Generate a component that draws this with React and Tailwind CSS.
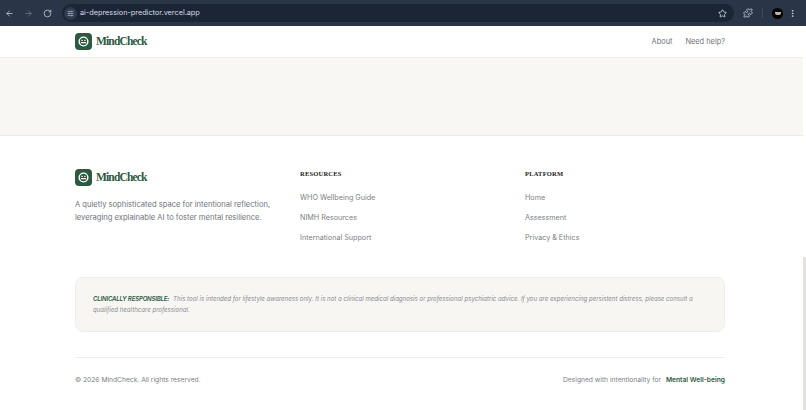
import { ArrowLeft, ArrowRight, RotateCw, Star, Puzzle, EllipsisVertical, SlidersHorizontal } from 'lucide-react'

const RESOURCES = ['WHO Wellbeing Guide', 'NIMH Resources', 'International Support']
const PLATFORM = ['Home', 'Assessment', 'Privacy & Ethics']

function Logo() {
  return (
    <div className="flex items-center gap-[4px]">
      <div className="flex h-[17px] w-[17px] items-center justify-center rounded-[4px] bg-[#2d5a3f]">
        <svg width="11" height="11" viewBox="0 0 24 24" fill="none">
          <circle cx="12" cy="12" r="9.5" stroke="white" strokeWidth="3" />
          <path d="M7.5 14.5h9" stroke="white" strokeWidth="3" strokeLinecap="round" />
          <path d="M8 9.5h2M14 9.5h2" stroke="white" strokeWidth="2" strokeLinecap="round" />
        </svg>
      </div>
      <span className='font-["Liberation_Serif",serif] text-[11.5px] font-bold tracking-[-0.85px] text-[#2d5a3f]'>MindCheck</span>
    </div>
  )
}

function LinkColumn({ title, links }) {
  return (
    <div className="flex flex-col">
      <h4 className='font-["Liberation_Serif",serif] text-[6.5px] leading-[9px] font-bold tracking-[0.2px] text-[#1a1a1a]'>{title}</h4>
      <ul className="mt-[14px] flex flex-col gap-[9px]">
        {links.map(l => (
          <li key={l} className="text-[7.2px] leading-[11px] text-[#7a7f85]">{l}</li>
        ))}
      </ul>
    </div>
  )
}

export default function App() {
  return (
    <div className='flex h-[410px] w-[806px] flex-col overflow-hidden bg-white font-["Inter",sans-serif]'>
      {/* browser chrome */}
      <div className="flex h-[26px] shrink-0 items-center bg-[#2a3648] pl-[5px] pr-[7px] text-[#c9d1dc]">
        <ArrowLeft size={9} strokeWidth={2} />
        <ArrowRight size={9} strokeWidth={2} className="ml-[10px] text-[#6d7888]" />
        <RotateCw size={9} strokeWidth={2} className="ml-[10px]" />
        <div className="ml-[10px] flex h-[18px] w-[672px] items-center rounded-full bg-[#1c2536] pl-[2px] pr-[7px]">
          <div className="flex h-[13px] w-[13px] items-center justify-center rounded-full bg-[#2f3b4e]">
            <SlidersHorizontal size={7} />
          </div>
          <span className="ml-[3px] text-[7.3px] text-[#d6dce5]">ai-depression-predictor.vercel.app</span>
          <Star size={9} strokeWidth={2} className="ml-auto text-[#e4e8ee]" />
        </div>
        <Puzzle size={10} strokeWidth={2} className="ml-[9px]" />
        <div className="ml-[9px] h-[10px] w-px bg-[#3d4a5d]" />
        <div className="ml-[9px] flex h-[11px] w-[11px] items-center justify-center rounded-full bg-black">
          <div className="h-[3px] w-[6px] rounded-b-[2px] bg-[#b9b4a6]" />
        </div>
        <EllipsisVertical size={9} strokeWidth={2.4} className="ml-[5px]" />
      </div>

      <div className="flex min-h-0 flex-1">
        <div className="flex min-w-0 flex-1 flex-col">
          {/* nav */}
          <header className="flex h-[32px] shrink-0 items-center justify-between border-b border-[#ecebe6] pl-[75px] pr-[78px]">
            <Logo />
            <nav className="flex gap-[13px] text-[7.4px] text-[#6f747a]">
              <span>About</span>
              <span>Need help?</span>
            </nav>
          </header>

          <div className="h-[78px] shrink-0 border-b border-[#ecebe6] bg-[#f8f7f3]" />

          {/* footer */}
          <footer className="flex-1 pl-[75px] pr-[78px] pt-[33px]">
            <div className="grid grid-cols-[225px_225px_1fr]">
              <div>
                <Logo />
                <p className="mt-[13px] w-[205px] text-[7.6px] leading-[12.5px] text-[#6f747a]">
                  A quietly sophisticated space for intentional reflection, leveraging explainable AI to foster mental resilience.
                </p>
              </div>
              <div><LinkColumn title="RESOURCES" links={RESOURCES} /></div>
              <div><LinkColumn title="PLATFORM" links={PLATFORM} /></div>
            </div>

            <div className="mt-[34px] rounded-[8px] border border-[#eeede8] bg-[#f7f6f3] px-[17px] py-[16px] text-[6.1px] leading-[10.5px] text-[#8a8d90] italic">
              <span className="font-semibold tracking-[-0.2px] text-[#2d5a3f]">CLINICALLY RESPONSIBLE:</span>
              <span className="ml-[4px]">This tool is intended for lifestyle awareness only. It is not a clinical medical diagnosis or professional psychiatric advice. If you are experiencing persistent distress, please consult a qualified healthcare professional.</span>
            </div>

            <div className="mt-[25px] flex items-center justify-between border-t border-[#f0efeb] pt-[17px] text-[6.7px] leading-[11px] text-[#7a7f85]">
              <span>© 2026 MindCheck. All rights reserved.</span>
              <span>
                Designed with intentionality for <span className="ml-[3px] font-semibold text-[#2d5a3f]">Mental Well-being</span>
              </span>
            </div>
          </footer>
        </div>
        {/* page scrollbar */}
        <div className="flex w-[3px] shrink-0 flex-col bg-white">
          <div className="mt-[231px] flex-1 bg-[#e4e2dc]" />
        </div>
      </div>
    </div>
  )
}
